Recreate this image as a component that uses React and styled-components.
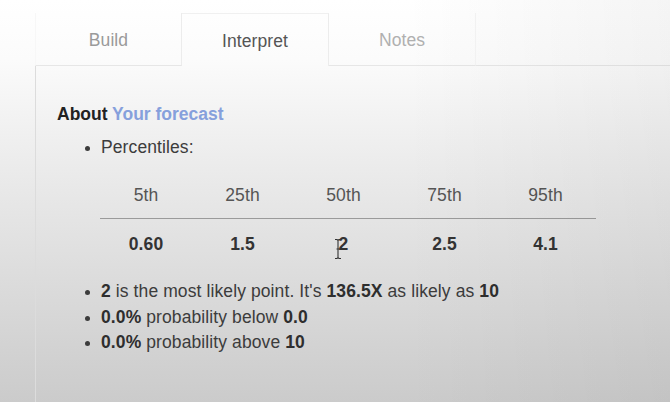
import React from "react";
import styled, { createGlobalStyle } from "styled-components";

const GlobalStyle = createGlobalStyle`
  html, body {
    margin: 0;
    padding: 0;
  }
  body {
    width: 670px;
    height: 402px;
    overflow: hidden;
    font-family: "Liberation Sans", Arial, sans-serif;
    background: linear-gradient(180deg, #ffffff 0px, #fbfbfb 60px, #efefef 140px, #e0e0e0 250px, #cbcbcb 402px);
  }
`;

const Page = styled.div`
  position: relative;
  height: 402px;
  padding: 13px 0 0 35px;
  box-sizing: border-box;
  display: flex;
  flex-direction: column;
  &::after {
    content: "";
    position: absolute;
    inset: 0;
    pointer-events: none;
    background: linear-gradient(90deg, rgba(0, 0, 0, 0) 60%, rgba(0, 0, 0, 0.04) 100%);
  }
`;

const TabBar = styled.div`
  display: flex;
  height: 53px;
`;

const Tab = styled.div`
  width: 147px;
  display: flex;
  align-items: center;
  justify-content: center;
  padding-top: 2px;
  font-size: 17.5px;
  letter-spacing: 0.1px;
  color: ${({ active, muted }) => (active ? "#555" : muted ? "#b0b0b0" : "#9a9a9a")};
  border-right: 1px solid ${({ muted }) => (muted ? "#f4f4f4" : "#ececec")};
  border-top: ${({ active }) => (active ? "1px solid #f0f0f0" : "none")};
  border-bottom: ${({ active }) => (active ? "none" : "1px solid #e6e6e6")};
  border-left: ${({ first }) => (first ? "1px solid #f7f7f7" : "none")};
  box-sizing: border-box;
`;

const Filler = styled.div`
  flex: 1;
  border-bottom: 1px solid #e6e6e6;
`;

const Panel = styled.div`
  flex: 1;
  border-left: 1px solid #dcdcdc;
  padding: 38px 0 0 21px;
  color: #3c3c3c;
`;

const Heading = styled.div`
  font-size: 17.5px;
  line-height: 20px;
  font-weight: 700;
  color: #222;
`;

const Accent = styled.span`
  color: #86a0dc;
`;

const List = styled.ul`
  margin: ${({ top }) => top}px 0 0 0;
  padding-left: 44px;
  font-size: 17.5px;
  letter-spacing: 0.1px;
  line-height: ${({ lh }) => lh}px;
  li::marker {
    font-size: 15px;
  }
  b {
    color: #2e2e2e;
  }
`;

const Table = styled.div`
  display: grid;
  grid-template-columns: 92px 101px 101px 101px 101px;
  width: 496px;
  margin: 22px 0 0 -1px;
  font-size: 17.5px;
  line-height: 26px;
  position: relative;
`;

const Head = styled.div`
  text-align: center;
  color: #555;
  padding-bottom: 10px;
  border-bottom: 1.5px solid #9a9a9a;
`;

const Cell = styled.div`
  text-align: center;
  font-weight: 700;
  color: #333;
  padding-top: 12px;
  position: relative;
`;

const Cursor = styled.svg`
  position: absolute;
  left: 40px;
  top: 19px;
`;

const headers = ["5th", "25th", "50th", "75th", "95th"];
const values = ["0.60", "1.5", "2", "2.5", "4.1"];

export default function App() {
  return (
    <>
      <GlobalStyle />
      <Page>
        <TabBar>
          <Tab first>Build</Tab>
          <Tab active>Interpret</Tab>
          <Tab muted>Notes</Tab>
          <Filler />
        </TabBar>
        <Panel>
          <Heading>
            About <Accent>Your forecast</Accent>
          </Heading>
          <List top={10} lh={26}>
            <li>
              Percentiles:
              <Table>
                {headers.map((h) => (
                  <Head key={h}>{h}</Head>
                ))}
                {values.map((v, i) => (
                  <Cell key={i}>
                    {v}
                    {i === 2 && (
                      <Cursor width="10" height="22" viewBox="0 0 10 22">
                        <path
                          d="M2 1.5h2l1 1 1-1h2M5 2.5v17M2 20.5h2l1-1 1 1h2M3.5 11h3"
                          stroke="#333"
                          strokeWidth="1.1"
                          fill="none"
                        />
                      </Cursor>
                    )}
                  </Cell>
                ))}
              </Table>
            </li>
          </List>
          <List top={22} lh={25.5}>
            <li>
              <b>2</b> is the most likely point. It's <b>136.5X</b> as likely as <b>10</b>
            </li>
            <li>
              <b>0.0%</b> probability below <b>0.0</b>
            </li>
            <li>
              <b>0.0%</b> probability above <b>10</b>
            </li>
          </List>
        </Panel>
      </Page>
    </>
  );
}
